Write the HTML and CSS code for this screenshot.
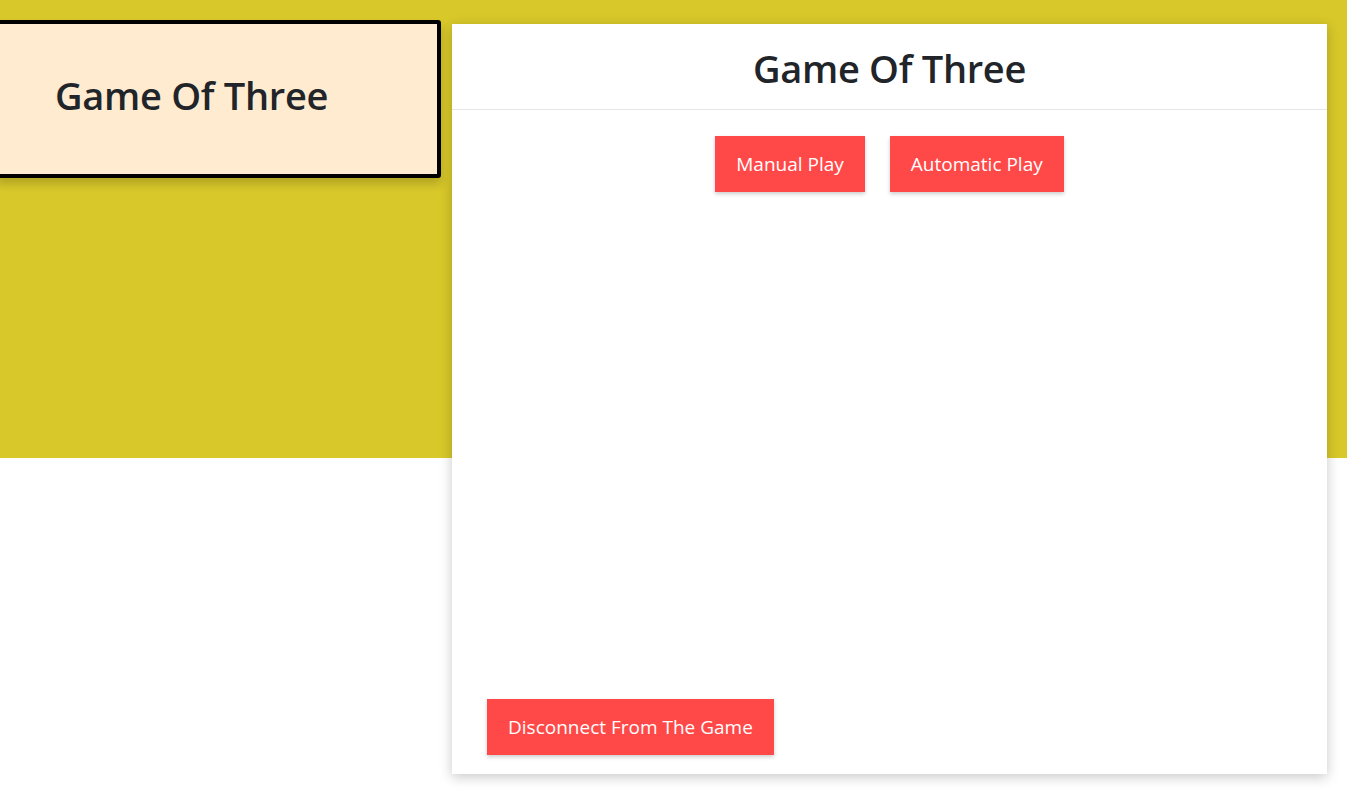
FILE: index.html
```html
<!DOCTYPE html>
<html>
<head>
<meta charset="utf-8">
<title>Game Of Three</title>
<link rel="stylesheet" href="styles.css">
</head>
<body>
<main class="layout">
  <section class="brand-card">
    <h1 class="brand-title">Game Of Three</h1>
  </section>
  <section class="game-card">
    <header class="game-header">
      <h1 class="game-title">Game Of Three</h1>
    </header>
    <div class="game-body">
      <div class="mode-row">
        <button class="btn">Manual Play</button>
        <button class="btn">Automatic Play</button>
      </div>
      <div class="footer-row">
        <button class="btn">Disconnect From The Game</button>
      </div>
    </div>
  </section>
</main>
</body>
</html>
```

FILE: styles.css
```css
html, body {
  margin: 0;
  padding: 0;
}
body {
  font-family: "Open Sans", "Noto Sans", sans-serif;
  color: #212529;
  background: linear-gradient(to bottom, #d8c82a 0, #d8c82a 458px, #ffffff 458px);
  min-height: 804px;
  overflow: hidden;
}
.layout {
  display: flex;
  align-items: flex-start;
  gap: 11px;
  padding-top: 20px;
}
.brand-card {
  margin-left: -4px;
  width: 437px;
  height: 150px;
  border: 4px solid #000;
  border-radius: 3px;
  background: #ffebd0;
  box-shadow: 0 6px 10px rgba(0, 0, 0, 0.18);
  display: flex;
  align-items: center;
  box-sizing: content-box;
}
.brand-title {
  margin: 0 0 8px 55px;
  font-size: 38px;
  font-weight: 600;
  letter-spacing: -0.3px;
}
.game-card {
  margin-top: 4px;
  width: 875px;
  height: 750px;
  background: #fff;
  box-shadow: 0 3px 12px rgba(0, 0, 0, 0.22);
  display: flex;
  flex-direction: column;
}
.game-header {
  height: 85px;
  border-bottom: 1px solid #e6e6e6;
  display: flex;
  align-items: center;
  justify-content: center;
}
.game-title {
  margin: 2px 0 0 0;
  font-size: 38px;
  font-weight: 600;
  letter-spacing: -0.3px;
}
.game-body {
  flex: 1;
  display: flex;
  flex-direction: column;
  padding: 26px 35px 19px;
}
.mode-row {
  display: flex;
  justify-content: center;
  gap: 25px;
}
.footer-row {
  margin-top: auto;
  display: flex;
}
.btn {
  height: 56px;
  padding: 0 21px;
  border: none;
  border-radius: 0;
  background: #ff4848;
  color: #fff;
  font-family: "Open Sans", "Noto Sans", sans-serif;
  font-size: 19px;
  box-shadow: 0 2px 4px rgba(0, 0, 0, 0.2);
  cursor: pointer;
}
```
